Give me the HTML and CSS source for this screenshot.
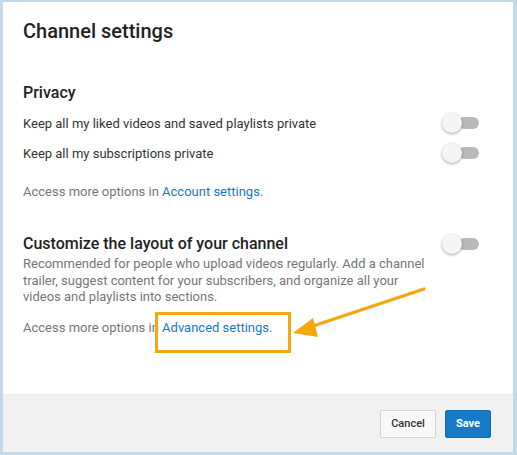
FILE: index.html
```html
<!DOCTYPE html>
<html>
<head>
<meta charset="utf-8">
<link rel="stylesheet" href="styles.css">
</head>
<body>
<div class="dialog">
  <div class="content">
    <h1 class="title">Channel settings</h1>
    <h2 class="heading privacy">Privacy</h2>
    <div class="row">
      <span class="label">Keep all my liked videos and saved playlists private</span>
      <span class="toggle"><span class="knob"></span></span>
    </div>
    <div class="row">
      <span class="label">Keep all my subscriptions private</span>
      <span class="toggle"><span class="knob"></span></span>
    </div>
    <p class="access first">Access more options in <a class="link">Account settings</a>.</p>

    <div class="row section">
      <h2 class="heading">Customize the layout of your channel</h2>
      <span class="toggle"><span class="knob"></span></span>
    </div>
    <p class="desc">Recommended for people who upload videos regularly. Add a channel trailer, suggest content for your subscribers, and organize all your videos and playlists into sections.</p>
    <p class="access second">Access more options in <a class="link">Advanced settings</a>.</p>
  </div>
  <div class="footer">
    <button class="btn cancel">Cancel</button>
    <button class="btn save">Save</button>
  </div>
  <svg class="annot" width="517" height="455" viewBox="0 0 517 455">
    <rect x="156.5" y="313.5" width="133" height="38" fill="none" stroke="#f6a60f" stroke-width="3"/>
    <line x1="424" y1="289" x2="310" y2="327" stroke="#f6a60f" stroke-width="3.2" stroke-linecap="round"/>
    <polygon points="293,333 313,318 318,337" fill="#f6a60f"/>
  </svg>
</div>
</body>
</html>
```
FILE: styles.css
```css
html, body {
  margin: 0;
  padding: 0;
}
body {
  background: #c3d8ea;
  width: 517px;
  height: 455px;
  overflow: hidden;
  font-family: Roboto, "Liberation Sans", Arial, sans-serif;
}
.dialog {
  margin: 2px 0 0 3px;
  width: 510px;
  height: 450px;
  background: #fff;
  display: flex;
  flex-direction: column;
}
.content {
  flex: 1;
  padding: 17px 34px 0 20px;
}
.title {
  margin: 0;
  font-size: 20px;
  line-height: 24px;
  font-weight: 500;
  color: #222;
}
.heading {
  margin: 0;
  font-size: 16px;
  line-height: 20px;
  font-weight: 500;
  color: #222;
}
.privacy {
  margin-top: 40px;
  margin-bottom: 5px;
}
.row {
  display: flex;
  align-items: center;
  justify-content: space-between;
  height: 30px;
}
.label {
  font-size: 13px;
  color: #333;
}
.toggle {
  position: relative;
  width: 37px;
  height: 12px;
  display: inline-block;
}
.toggle::before {
  content: "";
  position: absolute;
  left: 16px;
  top: 0;
  width: 21px;
  height: 12px;
  border-radius: 6px;
  background: #b9b9b9;
}
.knob {
  position: absolute;
  left: 0;
  top: -4px;
  width: 20px;
  height: 20px;
  border-radius: 50%;
  background: #f5f5f5;
  box-shadow: 0 1px 3px rgba(0,0,0,0.35);
}
.access {
  margin: 0;
  font-size: 13px;
  line-height: 18px;
  color: #767676;
}
.access.first {
  margin-top: 15px;
}
.link {
  color: #167ac6;
  text-decoration: none;
}
.section {
  margin-top: 28px;
}
.desc {
  margin: -3px 0 0;
  width: 410px;
  font-size: 13px;
  line-height: 16.5px;
  color: #767676;
}
.access.second {
  margin-top: 13px;
}
.footer {
  height: 58px;
  background: #f1f1f1;
  border-top: 1px solid #ececec;
  display: flex;
  align-items: center;
  justify-content: flex-end;
  padding-right: 22px;
  gap: 9px;
  box-sizing: border-box;
}
.btn {
  height: 28px;
  font-family: Roboto, "Liberation Sans", Arial, sans-serif;
  font-size: 11px;
  font-weight: 500;
  border-radius: 2px;
  padding: 0 10px;
  cursor: pointer;
}
.cancel {
  width: 56px;
  background: #f8f8f8;
  border: 1px solid #d3d3d3;
  color: #333;
}
.save {
  width: 46px;
  background: #167ac6;
  border: 1px solid #126db3;
  color: #fff;
  font-weight: 700;
}
.annot {
  position: absolute;
  left: 0;
  top: 0;
  pointer-events: none;
}
```
